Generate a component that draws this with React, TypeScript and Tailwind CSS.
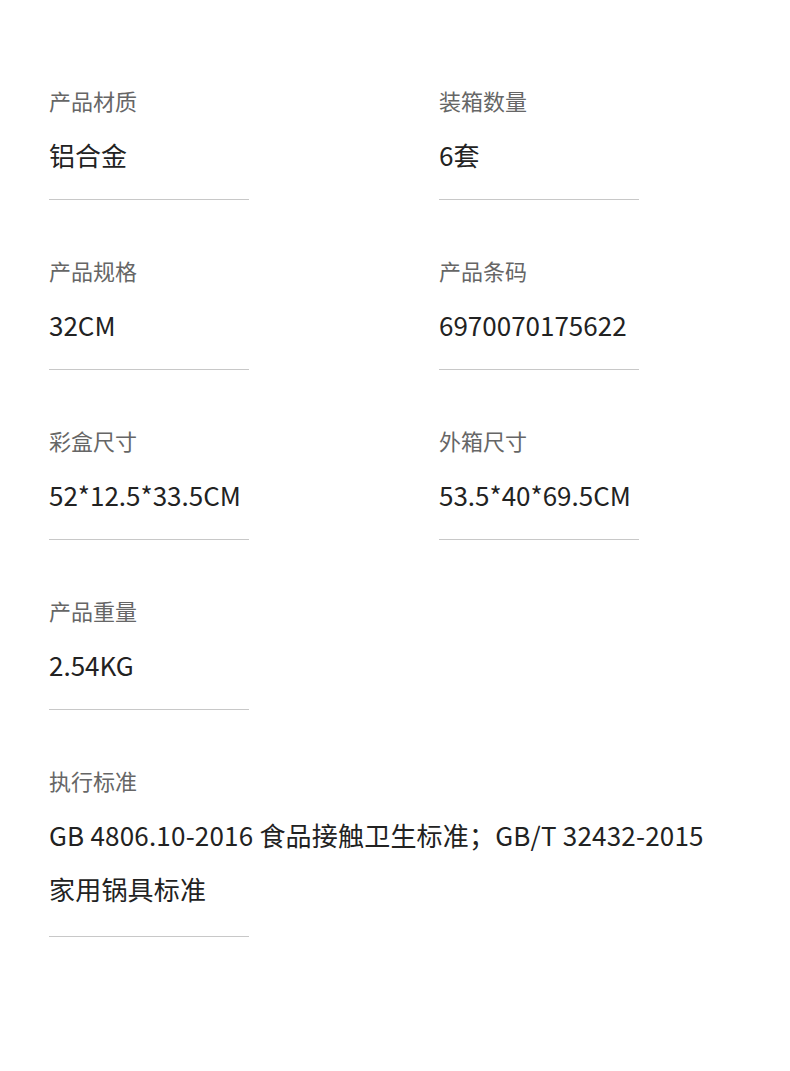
import React from "react";

type Spec = { label: string; value: string };

const specs: Spec[] = [
  { label: "产品材质", value: "铝合金" },
  { label: "装箱数量", value: "6套" },
  { label: "产品规格", value: "32CM" },
  { label: "产品条码", value: "6970070175622" },
  { label: "彩盒尺寸", value: "52*12.5*33.5CM" },
  { label: "外箱尺寸", value: "53.5*40*69.5CM" },
  { label: "产品重量", value: "2.54KG" },
];

const SpecItem: React.FC<Spec & { wide?: boolean }> = ({ label, value, wide }) => (
  <div className="mb-[54px]">
    <div className="text-[22px] leading-[32px] text-[#666666]">{label}</div>
    <div
      className={`mt-[12px] text-[26px] leading-[54px] text-[#222222] ${
        wide ? "w-[680px] tracking-[0.2px] pb-[3px]" : ""
      }`}
    >
      {value}
    </div>
    <div className="mt-[17px] h-px w-[200px] bg-[#c8c8c8]" />
  </div>
);

export default function App() {
  return (
    <div
      className="min-h-[1071px] w-[790px] bg-white pl-[49px] pt-[84px]"
      style={{ fontFamily: '"Noto Sans CJK SC", "Noto Sans", sans-serif' }}
    >
      <div className="grid grid-cols-[390px_1fr]">
        {specs.map((s) => (
          <SpecItem key={s.label} {...s} />
        ))}
      </div>
      <SpecItem
        wide
        label="执行标准"
        value="GB 4806.10-2016 食品接触卫生标准；GB/T 32432-2015 家用锅具标准"
      />
    </div>
  );
}
